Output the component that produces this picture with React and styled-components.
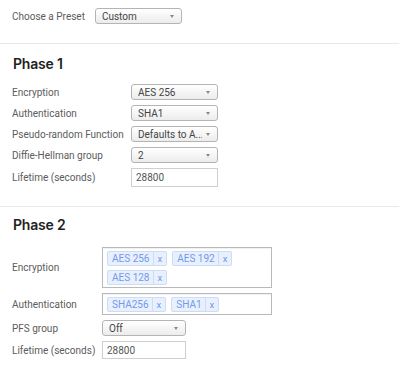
import React from "react";
import styled, { createGlobalStyle } from "styled-components";

const GlobalStyle = createGlobalStyle`
  body {
    margin: 0;
    background: #fff;
    font-family: Roboto, "Liberation Sans", Arial, sans-serif;
    font-size: 10px;
    color: #555;
  }
`;

const Page = styled.div`
  width: 399px;
  display: flex;
  flex-direction: column;
`;

const PresetBar = styled.div`
  display: flex;
  align-items: center;
  gap: 10px;
  padding: 8px 12px 19px;
  border-bottom: 1px solid #e9e9e9;
`;

const Section = styled.section`
  display: flex;
  flex-direction: column;
  padding: ${({ $top }) => $top}px 12px 19px;
  border-bottom: ${({ $last }) => ($last ? "none" : "1px solid #e9e9e9")};
`;

const Heading = styled.h2`
  margin: 0 0 ${({ $gap }) => $gap}px 1px;
  font-family: Inter, "Noto Sans", sans-serif;
  font-size: 14px;
  font-weight: 600;
  line-height: 20px;
  color: #222;
  letter-spacing: -0.2px;
`;

const Rows = styled.div`
  display: grid;
  grid-template-columns: ${({ $label }) => $label}px auto;
  row-gap: ${({ $gap }) => $gap}px;
  align-items: center;
  justify-items: start;
`;

const Label = styled.span`
  color: #5c5c5c;
  font-size: 10px;
  white-space: nowrap;
`;

const Select = styled.div`
  box-sizing: border-box;
  width: ${({ $w }) => $w}px;
  height: 16px;
  display: flex;
  align-items: center;
  justify-content: space-between;
  gap: 4px;
  padding: 0 7px 0 6px;
  border: 1px solid #b4b4b4;
  border-radius: 3px;
  background: linear-gradient(#ffffff, #ececec);
  color: #444;
  font-size: 10px;
`;

const SelectValue = styled.span`
  white-space: nowrap;
  overflow: hidden;
`;

const Arrow = styled.span`
  flex: none;
  width: 0;
  height: 0;
  border-left: 2.5px solid transparent;
  border-right: 2.5px solid transparent;
  border-top: 3px solid #888;
`;

const Input = styled.div`
  box-sizing: border-box;
  width: ${({ $w }) => $w}px;
  height: ${({ $h }) => $h}px;
  display: flex;
  align-items: center;
  padding: 0 4px;
  border: 1px solid #cfcfcf;
  color: #555;
  font-size: 10px;
`;

const TagBox = styled.div`
  box-sizing: border-box;
  width: 170px;
  min-height: 22px;
  display: flex;
  flex-wrap: wrap;
  align-content: flex-start;
  gap: 4px 5px;
  padding: 3px 4px 2px;
  border: 1px solid #b9b9b9;
  box-shadow: inset 0 1px 1px rgba(0, 0, 0, 0.06);
`;

const Tag = styled.span`
  display: flex;
  height: 15px;
  box-sizing: border-box;
  align-items: stretch;
  border: 1px solid #cddcf7;
  border-radius: 2px;
  background: #e9f0fd;
  color: #7399ea;
  font-size: 10px;
  line-height: 13px;
`;

const TagText = styled.span`
  padding: 0 3px 0 4px;
`;

const TagClose = styled.span`
  padding: 0 4px;
  border-left: 1px solid #cddcf7;
  font-size: 9.5px;
`;

const Chip = ({ children }) => (
  <Tag>
    <TagText>{children}</TagText>
    <TagClose>x</TagClose>
  </Tag>
);

const Dropdown = ({ value, w }) => (
  <Select $w={w}>
    <SelectValue>{value}</SelectValue>
    <Arrow />
  </Select>
);

export default function App() {
  return (
    <Page>
      <GlobalStyle />
      <PresetBar>
        <Label>Choose a Preset</Label>
        <Dropdown value="Custom" w={87} />
      </PresetBar>

      <Section $top={10}>
        <Heading $gap={10}>Phase 1</Heading>
        <Rows $label={119} $gap={5}>
          <Label>Encryption</Label>
          <Dropdown value="AES 256" w={87} />
          <Label>Authentication</Label>
          <Dropdown value="SHA1" w={87} />
          <Label>Pseudo-random Function</Label>
          <Dropdown value="Defaults to A..." w={87} />
          <Label>Diffie-Hellman group</Label>
          <Dropdown value="2" w={87} />
          <Label>Lifetime (seconds)</Label>
          <Input $w={87} $h={19}>28800</Input>
        </Rows>
      </Section>

      <Section $top={8} $last>
        <Heading $gap={12}>Phase 2</Heading>
        <Rows $label={90} $gap={5}>
          <Label>Encryption</Label>
          <TagBox>
            <Chip>AES 256</Chip>
            <Chip>AES 192</Chip>
            <Chip>AES 128</Chip>
          </TagBox>
          <Label>Authentication</Label>
          <TagBox>
            <Chip>SHA256</Chip>
            <Chip>SHA1</Chip>
          </TagBox>
          <Label>PFS group</Label>
          <Dropdown value="Off" w={84} />
          <Label>Lifetime (seconds)</Label>
          <Input $w={84} $h={18}>28800</Input>
        </Rows>
      </Section>
    </Page>
  );
}
